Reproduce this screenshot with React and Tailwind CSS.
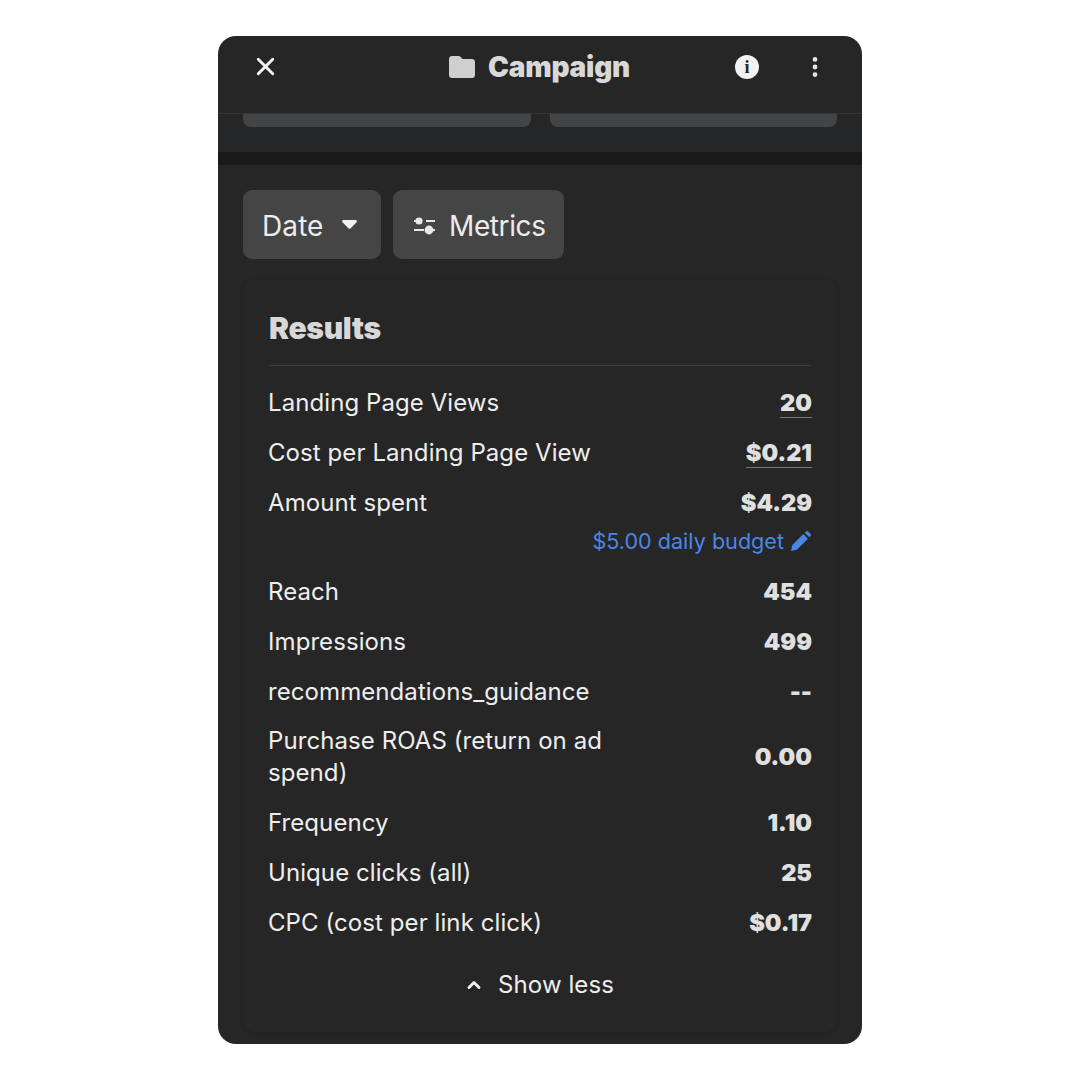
import React from 'react';
import { X, EllipsisVertical, ChevronUp } from 'lucide-react';

const font = "font-['Inter','Liberation_Sans',sans-serif]";

const Row = ({ label, value, underline, tall }) => (
    <div className={`flex items-center justify-between ${tall ? 'h-[80.600px]' : 'h-[50.200px]'}`}>
        <div className="w-[350px] -ml-[1px] text-[24px] leading-[32px] tracking-[0.08px] text-[#eeeeee]">{label}</div>
        <div className={`-mr-[1px] text-[23.500px] font-black text-[#e0e0e0] ${underline ? 'leading-[28px] border-b border-[#777777]' : 'leading-[30px]'}`}>
            {value}
        </div>
    </div>
);

const FolderIcon = () => (
    <svg width="26" height="22" viewBox="0 0 26 22" fill="#cfcfcf">
        <path d="M3 0h6.500c1 0 1.600.4 2.200 1l1.800 2H23c1.700 0 3 1.300 3 3v13c0 1.700-1.300 3-3 3H3c-1.700 0-3-1.300-3-3V3c0-1.700 1.300-3 3-3z" />
    </svg>
);

const SlidersIcon = () => (
    <svg width="24" height="20" viewBox="0 0 24 20" fill="none" stroke="#e8e8e8" strokeWidth="2">
        <circle cx="6" cy="5" r="3.600" fill="#e8e8e8" stroke="none" />
        <path d="M1 5h2M13 5h9M1 14h10" />
        <circle cx="16" cy="14" r="4.400" fill="#e8e8e8" stroke="none" />
        <path d="M20 14h2" />
    </svg>
);

const PencilIcon = () => (
    <svg width="20" height="20" viewBox="0 0 20 20" fill="#4a86e8">
        <path d="M0 20l1.200-5.800L12.300 3.100l4.600 4.600L5.800 18.800 0 20zM13.700 1.700l1-1c.8-.8 2-.8 2.800 0l1.800 1.800c.8.8.8 2 0 2.800l-1 1-4.600-4.600z" />
    </svg>
);

const App = () => {
    return (
        <div className={`min-h-[1080px] bg-white flex justify-center pt-[36px] ${font}`}>
            <div className="w-[644px] h-[1008px] bg-[#262626] rounded-[18px] overflow-hidden flex flex-col">
                {/* Header */}
                <div className="h-[78px] shrink-0 border-b border-[#363636] relative flex items-center justify-between pl-[33px] pr-[36px] pb-[16px]">
                    <X size={29} color="#f2f2f2" strokeWidth={2.4} />
                    <div className="absolute left-[231px] top-[13px] flex items-center gap-[13px]">
                        <FolderIcon />
                        <span className="text-[28px] leading-[36px] font-black text-[#d8d8d8] tracking-[-0.2px]">Campaign</span>
                    </div>
                    <div className="flex items-center gap-[43px]">
                        <div className="w-[24px] h-[24px] rounded-full bg-[#f2f2f2] flex items-center justify-center">
                            <span className="text-[#262626] text-[18px] leading-none font-bold font-['Liberation_Serif',serif]">i</span>
                        </div>
                        <EllipsisVertical size={26} color="#e8e8e8" strokeWidth={2.4} className="-mr-[2px]" />
                    </div>
                </div>

                {/* Clipped cards behind the header */}
                <div className="flex gap-[19px] px-[25px] shrink-0">
                    <div className="w-[288px] h-[13px] bg-[#434445] rounded-b-[8px]" />
                    <div className="w-[287px] h-[13px] bg-[#434445] rounded-b-[8px]" />
                </div>
                <div className="h-[25px] shrink-0 bg-[#252628]" />
                <div className="h-[13px] shrink-0 bg-[#1a1a1a]" />

                {/* Filters */}
                <div className="flex gap-[12px] px-[25px] pt-[25px] shrink-0">
                    <div className="w-[138px] h-[69px] bg-[#454545] rounded-[9px] flex items-center pl-[19px] gap-[18px] pt-[3px]">
                        <span className="text-[28px] text-[#ececec] tracking-[0.1px]">Date</span>
                        <svg width="15" height="9" viewBox="0 0 15 9" fill="#f0f0f0" className="-mt-[3px]">
                            <path d="M1.500 0h12c1.200 0 1.800 1.300 1 2.200L8.500 8.400c-.5.5-1.400.5-1.900 0L.5 2.200C-.3 1.300.3 0 1.500 0z" />
                        </svg>
                    </div>
                    <div className="w-[171px] h-[69px] bg-[#454545] rounded-[9px] flex items-center pl-[20px] gap-[12px] pt-[3px]">
                        <SlidersIcon />
                        <span className="text-[28px] text-[#ececec] tracking-[-0.4px]">Metrics</span>
                    </div>
                </div>

                {/* Results card */}
                <div className="mx-[25px] mt-[21px] h-[752px] shrink-0 bg-[#262626] rounded-[12px] shadow-[0_1px_5px_rgba(0,0,0,0.2)] px-[26px] pt-[30px]">
                    <div className="h-[56px] border-b border-[#3d3d3d]">
                        <div className="text-[30px] leading-[37px] font-black text-[#d8d8d8] tracking-[-0.3px]">Results</div>
                    </div>
                    <div className="pt-[12px]">
                        <Row label="Landing Page Views" value="20" underline />
                        <Row label="Cost per Landing Page View" value="$0.21" underline />
                        <Row label="Amount spent" value="$4.29" />
                        <div className="flex items-center justify-end gap-[7px] h-[25px] mb-[13px]">
                            <span className="text-[21.600px] leading-[25px] text-[#4a86e8]">$5.00 daily budget</span>
                            <PencilIcon />
                        </div>
                        <Row label="Reach" value="454" />
                        <Row label="Impressions" value="499" />
                        <Row label="recommendations_guidance" value="--" />
                        <Row label="Purchase ROAS (return on ad spend)" value="0.00" tall />
                        <Row label="Frequency" value="1.10" />
                        <Row label="Unique clicks (all)" value="25" />
                        <Row label="CPC (cost per link click)" value="$0.17" />
                    </div>
                    <div className="flex items-center justify-center gap-[14px] mt-[12px] h-[50px] pr-[2px]">
                        <ChevronUp size={20} color="#f0f0f0" strokeWidth={3.500} />
                        <span className="text-[24px] text-[#eeeeee] tracking-[0.08px]">Show less</span>
                    </div>
                </div>
            </div>
        </div>
    );
};

export default App;
